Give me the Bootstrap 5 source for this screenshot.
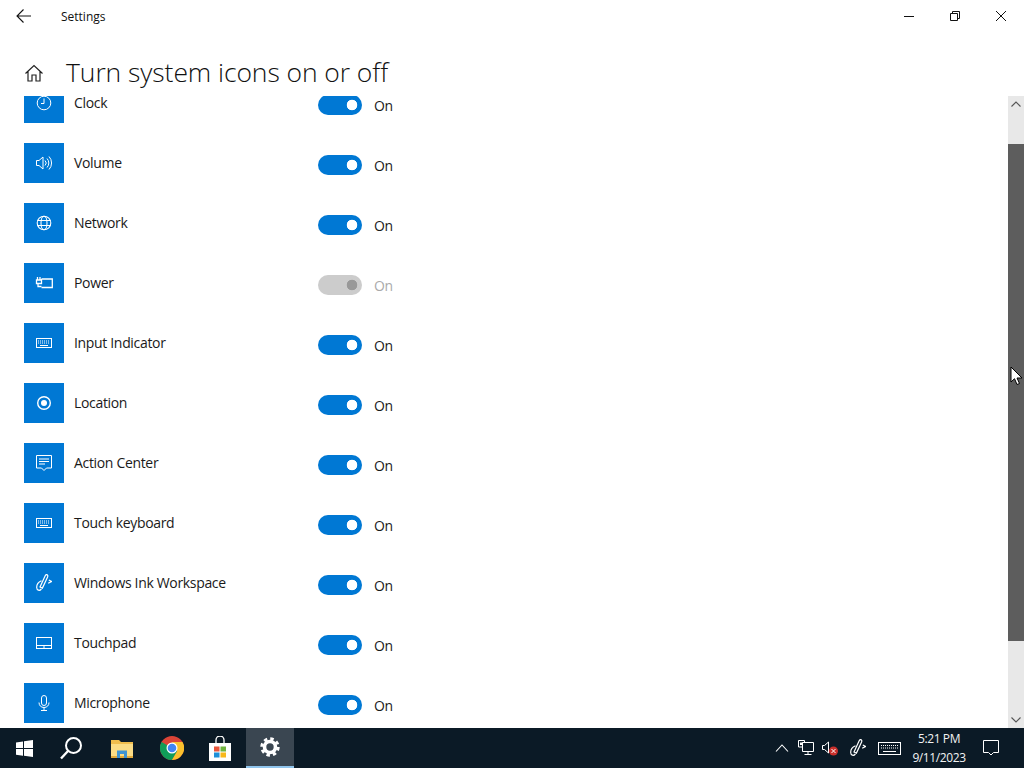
<!DOCTYPE html>
<html lang="en">
<head>
<meta charset="utf-8">
<title>Settings</title>
<link href="https://cdn.jsdelivr.net/npm/bootstrap@5.3.0/dist/css/bootstrap.min.css" rel="stylesheet">
<style>
html,body{height:100%;margin:0;overflow:hidden;background:#fff}
body{font-family:"Open Sans","Noto Sans","Liberation Sans",sans-serif;color:#111}
.win-shell{width:1024px;height:768px;position:relative}
.win-titlebar{height:32px;flex:none}
.win-back{width:48px;padding-left:16px;line-height:0}
.win-apptitle{font-size:12px;margin-left:13px;padding-top:2px}
.win-ctl{width:46px;height:32px;line-height:0}
.win-head{height:64px;padding:16px 0 0 24px;flex:none}
.win-home{margin-top:1px}
.win-heading{font-size:26.5px;font-weight:300;margin:2px 0 0 22px;color:#111;line-height:1.2;letter-spacing:-.08px}
.win-body{height:632px;flex:none}
.win-scroll{width:1008px;overflow:hidden}
.sys-list{margin-top:-13px;padding-left:24px;gap:20px}
.sys-row{height:40px}
.sys-tile{width:40px;height:40px;background:#0078d4;line-height:0}
.sys-label{width:254px;padding:0 0 2px 10px;font-size:14px;letter-spacing:-.33px;color:#1a1a1a}
.sys-switch{margin:12px 0 0 0;padding:0;min-height:0;line-height:0}
.sys-toggle.form-check-input{width:44px;height:20px;margin:0;float:none;border:0;border-radius:10px;background-color:#0078d4;background-image:radial-gradient(circle at 34px 10px,#fff 5px,transparent 5.6px);background-position:0 0;background-size:auto;opacity:1}
.sys-toggle.form-check-input:disabled{background-color:#ccc;background-image:radial-gradient(circle at 34px 10px,#999 5px,transparent 5.6px);opacity:1}
.sys-state{font-size:14px;margin-left:12px;margin-top:12px;color:#1a1a1a;letter-spacing:-.5px}
.sys-state-off{color:#aaa}
.sb-track{width:16px;background:#e8e8e8;flex:none}
.sb-arrow{height:16px;line-height:0;flex:none}
.sb-gap-top{height:32px;flex:none}
.sb-thumb{height:497px;background:#5d5d5d;flex:none}
.win-cursor{position:absolute;left:1010px;top:366px;line-height:0}
.task-bar{height:40px;background:#0b1a26;flex:none;color:#fff}
.task-btn{width:48px;height:40px;line-height:0;flex:none}
.task-search{width:46px}
.task-after-search{margin-left:4px}
.task-active{background:#3a4651;border-bottom:2px solid #8fc4ec;margin-left:2px}
.task-chrome{margin-left:2px}
.tray-box{margin-right:25px}
.tray-item{height:40px;line-height:0;flex:none}
.tray-net{margin-left:9px}
.tray-vol{margin-left:8px}
.tray-ink{margin-left:11px}
.tray-kb{margin-left:12px}
.tray-clock{width:66px;margin-left:5px;font-size:12px;line-height:19px;text-align:center;color:#f2f2f2;letter-spacing:-.4px}
.tray-note{margin-left:11px}
</style>
</head>
<body>
<div class="win-shell d-flex flex-column">
  <div class="win-titlebar d-flex align-items-center">
    <div class="win-back"><svg width="16" height="16" viewBox="0 0 16 16" fill="none" stroke="#111" stroke-width="1.1"><path d="M1 8h14M7.500 1.500 1 8l6.500 6.500"/></svg></div>
    <div class="win-apptitle">Settings</div>
    <div class="ms-auto d-flex">
      <div class="win-ctl d-flex align-items-center justify-content-center"><svg width="12" height="12" viewBox="0 0 12 12" stroke="#111" fill="none"><path d="M1 6.500h10"/></svg></div>
      <div class="win-ctl d-flex align-items-center justify-content-center"><svg width="12" height="12" viewBox="0 0 12 12" stroke="#111" fill="none"><path d="M1.500 3.500h7v7h-7zM3.500 3.500v-2h7v7h-2"/></svg></div>
      <div class="win-ctl d-flex align-items-center justify-content-center"><svg width="12" height="12" viewBox="0 0 12 12" stroke="#111" fill="none"><path d="M1 1l10 10M11 1 1 11"/></svg></div>
    </div>
  </div>
  <div class="win-head d-flex align-items-center">
    <svg class="win-home" width="20" height="20" viewBox="0 0 20 20" fill="none" stroke="#222" stroke-width="1.2"><path d="M1.500 10.500 10 2.500l8.500 8M4 8.500V18h4v-6h4v6h4V8.500"/></svg>
    <h1 class="win-heading">Turn system icons on or off</h1>
  </div>
  <div class="win-body d-flex">
    <div class="win-scroll flex-grow-1">
      <div class="sys-list d-flex flex-column">
        <div class="sys-row d-flex">
          <div class="sys-tile d-flex align-items-center justify-content-center"><svg width="16" height="16" viewBox="0 0 16 16" fill="none" stroke="#fff"><circle cx="8" cy="8" r="6.800"/><path d="M8 3.500V8.500H5"/></svg></div>
          <div class="sys-label d-flex align-items-center">Clock</div>
          <div class="form-check form-switch sys-switch"><input class="form-check-input sys-toggle" type="checkbox" role="switch" checked aria-label="Clock"></div>
          <div class="sys-state">On</div>
        </div>
        <div class="sys-row d-flex">
          <div class="sys-tile d-flex align-items-center justify-content-center"><svg width="16" height="16" viewBox="0 0 16 16" fill="none" stroke="#fff"><path d="M.5 5.500h2.500L7 2v12L3 10.500H.5zM9 5.500a3.500 3.500 0 0 1 0 5M11 3.500a6.500 6.500 0 0 1 0 9M13 1.500a9.500 9.500 0 0 1 0 13"/></svg></div>
          <div class="sys-label d-flex align-items-center">Volume</div>
          <div class="form-check form-switch sys-switch"><input class="form-check-input sys-toggle" type="checkbox" role="switch" checked aria-label="Volume"></div>
          <div class="sys-state">On</div>
        </div>
        <div class="sys-row d-flex">
          <div class="sys-tile d-flex align-items-center justify-content-center"><svg width="16" height="16" viewBox="0 0 16 16" fill="none" stroke="#fff" stroke-width="1.100"><circle cx="8" cy="8" r="6.800"/><ellipse cx="8" cy="8" rx="3" ry="6.800"/><path d="M1.500 5.500h13M1.500 10.500h13"/></svg></div>
          <div class="sys-label d-flex align-items-center">Network</div>
          <div class="form-check form-switch sys-switch"><input class="form-check-input sys-toggle" type="checkbox" role="switch" checked aria-label="Network"></div>
          <div class="sys-state">On</div>
        </div>
        <div class="sys-row d-flex">
          <div class="sys-tile d-flex align-items-center justify-content-center"><svg width="18" height="16" viewBox="0 0 18 16" fill="none" stroke="#fff" stroke-width="1.300"><path d="M6.500 4h10.800v8.500H6.500"/><path d="M6.500 4v1M1.500 5h5v3.500h-5zM2.500 2v3M5 2v3M3 8.500v3h3.500"/></svg></div>
          <div class="sys-label d-flex align-items-center">Power</div>
          <div class="form-check form-switch sys-switch"><input class="form-check-input sys-toggle" type="checkbox" role="switch" checked disabled aria-label="Power"></div>
          <div class="sys-state sys-state-off">On</div>
        </div>
        <div class="sys-row d-flex">
          <div class="sys-tile d-flex align-items-center justify-content-center"><svg width="16" height="16" viewBox="0 0 16 16" fill="none" stroke="#fff"><rect x=".5" y="3.500" width="15" height="9"/><path d="M2 6h12M2 8h12" stroke-dasharray="1 1"/><path d="M4 10.500h8"/></svg></div>
          <div class="sys-label d-flex align-items-center">Input Indicator</div>
          <div class="form-check form-switch sys-switch"><input class="form-check-input sys-toggle" type="checkbox" role="switch" checked aria-label="Input Indicator"></div>
          <div class="sys-state">On</div>
        </div>
        <div class="sys-row d-flex">
          <div class="sys-tile d-flex align-items-center justify-content-center"><svg width="16" height="16" viewBox="0 0 16 16" fill="#fff" stroke="none"><circle cx="8" cy="8" r="6.300" fill="none" stroke="#fff" stroke-width="1.400"/><circle cx="8" cy="8" r="3"/></svg></div>
          <div class="sys-label d-flex align-items-center">Location</div>
          <div class="form-check form-switch sys-switch"><input class="form-check-input sys-toggle" type="checkbox" role="switch" checked aria-label="Location"></div>
          <div class="sys-state">On</div>
        </div>
        <div class="sys-row d-flex">
          <div class="sys-tile d-flex align-items-center justify-content-center"><svg width="16" height="16" viewBox="0 0 16 16" fill="none" stroke="#fff"><path d="M.5.5h15v12.500h-5L8 15.500 5.500 13h-5zM3 4h10M3 6.500h10M3 9h6"/></svg></div>
          <div class="sys-label d-flex align-items-center">Action Center</div>
          <div class="form-check form-switch sys-switch"><input class="form-check-input sys-toggle" type="checkbox" role="switch" checked aria-label="Action Center"></div>
          <div class="sys-state">On</div>
        </div>
        <div class="sys-row d-flex">
          <div class="sys-tile d-flex align-items-center justify-content-center"><svg width="16" height="16" viewBox="0 0 16 16" fill="none" stroke="#fff"><rect x=".5" y="3.500" width="15" height="9"/><path d="M2 6h12M2 8h12" stroke-dasharray="1 1"/><path d="M4 10.500h8"/></svg></div>
          <div class="sys-label d-flex align-items-center">Touch keyboard</div>
          <div class="form-check form-switch sys-switch"><input class="form-check-input sys-toggle" type="checkbox" role="switch" checked aria-label="Touch keyboard"></div>
          <div class="sys-state">On</div>
        </div>
        <div class="sys-row d-flex">
          <div class="sys-tile d-flex align-items-center justify-content-center"><svg width="16" height="18" viewBox="0 0 16 18" fill="none" stroke="#fff" stroke-width="1.200"><path d="M9.200 1.700 4 13l2.400 1.100L11.600 3c.5-1.100.1-2.100-.8-2.400-.6-.2-1.200.3-1.600 1.100zM5.500 6.800C2.700 8 .6 10.800.7 13.500c.1 2.900 2.900 3.700 4.700 1.500M12.800 6l2.700 1.500-3.300 1.700"/></svg></div>
          <div class="sys-label d-flex align-items-center">Windows Ink Workspace</div>
          <div class="form-check form-switch sys-switch"><input class="form-check-input sys-toggle" type="checkbox" role="switch" checked aria-label="Windows Ink Workspace"></div>
          <div class="sys-state">On</div>
        </div>
        <div class="sys-row d-flex">
          <div class="sys-tile d-flex align-items-center justify-content-center"><svg width="16" height="16" viewBox="0 0 16 16" fill="none" stroke="#fff"><rect x=".5" y="2.500" width="15" height="11"/><path d="M.5 10.500h15M8 10.500v3"/></svg></div>
          <div class="sys-label d-flex align-items-center">Touchpad</div>
          <div class="form-check form-switch sys-switch"><input class="form-check-input sys-toggle" type="checkbox" role="switch" checked aria-label="Touchpad"></div>
          <div class="sys-state">On</div>
        </div>
        <div class="sys-row d-flex">
          <div class="sys-tile d-flex align-items-center justify-content-center"><svg width="16" height="16" viewBox="0 0 16 16" fill="none" stroke="#fff"><rect x="5.500" y=".5" width="5" height="10" rx="2.500"/><path d="M3 7.500c0 3 2 5 5 5s5-2 5-5M8 12.500v3M5 15.500h6"/></svg></div>
          <div class="sys-label d-flex align-items-center">Microphone</div>
          <div class="form-check form-switch sys-switch"><input class="form-check-input sys-toggle" type="checkbox" role="switch" checked aria-label="Microphone"></div>
          <div class="sys-state">On</div>
        </div>
      </div>
    </div>
    <div class="sb-track d-flex flex-column">
      <div class="sb-arrow d-flex align-items-center justify-content-center"><svg width="10" height="6" viewBox="0 0 10 6" fill="none" stroke="#555" stroke-width="1.100"><path d="M.5 5.500 5 1l4.500 4.500"/></svg></div>
      <div class="sb-gap-top"></div>
      <div class="sb-thumb"></div>
      <div class="flex-grow-1"></div>
      <div class="sb-arrow d-flex align-items-center justify-content-center"><svg width="10" height="6" viewBox="0 0 10 6" fill="none" stroke="#555" stroke-width="1.100"><path d="M.5.5 5 5l4.500-4.500"/></svg></div>
    </div>
  </div>
  <div class="task-bar d-flex align-items-center">
    <div class="task-btn d-flex align-items-center justify-content-center"><svg width="17" height="17" viewBox="0 0 17 17" fill="#fff"><path d="M0 2.400 7 1.400v6.700H0zM8 1.300 17 0v8.100H8zM0 9h7v6.700L0 14.700zM8 9h9v8l-9-1.300z"/></svg></div>
    <div class="task-btn task-search d-flex align-items-center justify-content-center"><svg width="24" height="24" viewBox="0 0 24 24" fill="none" stroke="#fff" stroke-width="2"><circle cx="14.500" cy="9.500" r="7.500"/><path d="M9 15 2 22.500" stroke-width="2.400"/></svg></div>
    <div class="task-btn task-after-search d-flex align-items-center justify-content-center"><svg width="22" height="19" viewBox="0 0 22 19"><path d="M0 1h8l2 2h12v4H0z" fill="#f0bd4d"/><rect x="0" y="5" width="22" height="13" fill="#fbdc85"/><rect x="0" y="17" width="22" height="2" fill="#e2a93a"/><path d="M6 19v-7.500h10V19h-3v-4H9v4z" fill="#3f94d3"/></svg></div>
    <div class="task-btn task-chrome d-flex align-items-center justify-content-center"><svg width="24" height="24" viewBox="0 0 24 24"><circle cx="12" cy="12" r="12" fill="#db4437"/><path d="M12 12 1.600 6A12 12 0 0 0 12 24l5.500-9z" fill="#0f9d58"/><path d="M12 6h10.500A12 12 0 0 1 12 24l5.200-9z" fill="#fbc02d"/><circle cx="12" cy="12" r="5.500" fill="#fff"/><circle cx="12" cy="12" r="4.300" fill="#4285f4"/></svg></div>
    <div class="task-btn d-flex align-items-center justify-content-center"><svg width="24" height="25" viewBox="0 0 24 25"><path d="M8 7V4a4 4 0 0 1 8 0v3" fill="none" stroke="#fff" stroke-width="1.300"/><rect x="1" y="7" width="22" height="18" fill="#fff"/><rect x="6" y="10.500" width="5.500" height="5" fill="#e8553a"/><rect x="12.500" y="10.500" width="5.500" height="5" fill="#6fb33f"/><rect x="6" y="16.500" width="5.500" height="5" fill="#1e90d8"/><rect x="12.500" y="16.500" width="5.500" height="5" fill="#f8b81c"/></svg></div>
    <div class="task-btn task-active d-flex align-items-center justify-content-center"><svg width="20" height="20" viewBox="0 0 20 20" fill="none" stroke="#fff"><circle cx="10" cy="10" r="5.500" stroke-width="3.600"/><circle cx="10" cy="10" r="8.200" stroke-width="3" stroke-dasharray="3.440 3"/></svg></div>
    <div class="ms-auto d-flex align-items-center tray-box">
      <div class="tray-item d-flex align-items-center"><svg width="14" height="8" viewBox="0 0 14 8" fill="none" stroke="#fff" stroke-width="1.100"><path d="M1 7.500 7 1l6 6.500"/></svg></div>
      <div class="tray-item tray-net d-flex align-items-center"><svg width="16" height="16" viewBox="0 0 16 16" fill="none" stroke="#fff"><path d="M4.500 2.500h11v9h-11zM4.500 7H.5V.5h6v2M10 11.500v3M6.500 14.500h7"/><path d="M2 2.500h3v2.500H2z" fill="#fff" stroke="none"/></svg></div>
      <div class="tray-item tray-vol d-flex align-items-center"><svg width="17" height="16" viewBox="0 0 17 16" fill="none" stroke="#fff"><path d="M.5 5.500h2L6.500 2v11l-4-3.500h-2z"/><circle cx="11.500" cy="11" r="4.500" fill="#c9302c" stroke="none"/><path d="M9.500 9l4 4M13.500 9l-4 4" stroke="#fff"/></svg></div>
      <div class="tray-item tray-ink d-flex align-items-center"><svg width="16" height="18" viewBox="0 0 16 18" fill="none" stroke="#fff" stroke-width="1.200"><path d="M9.200 1.700 4 13l2.400 1.100L11.600 3c.5-1.100.1-2.100-.8-2.400-.6-.2-1.200.3-1.600 1.100zM5.500 6.800C2.700 8 .6 10.800.7 13.500c.1 2.900 2.900 3.700 4.700 1.500M12.800 6l2.700 1.500-3.300 1.700"/></svg></div>
      <div class="tray-item tray-kb d-flex align-items-center"><svg width="23" height="13" viewBox="0 0 23 13" fill="none" stroke="#fff"><rect x=".5" y=".5" width="22" height="12"/><path d="M3 3.500h17M3 6h17" stroke-dasharray="1 1"/><path d="M5 9.500h13"/></svg></div>
      <div class="tray-clock"><div>5:21 PM</div><div>9/11/2023</div></div>
      <div class="tray-item tray-note d-flex align-items-center"><svg width="16" height="16" viewBox="0 0 16 16" fill="none" stroke="#fff"><path d="M.5.5h15v12h-5L8 15l-2.500-2.500h-5z"/></svg></div>
    </div>
  </div>
  <div class="win-cursor"><svg width="13" height="20" viewBox="0 0 13 20"><path d="M1 1v15l3.500-3.300L7 18.500l2.500-1-2.500-5.500h5z" fill="#fff" stroke="#000"/></svg></div>
</div>
<script src="https://cdn.jsdelivr.net/npm/bootstrap@5.3.0/dist/js/bootstrap.bundle.min.js"></script>
</body>
</html>
